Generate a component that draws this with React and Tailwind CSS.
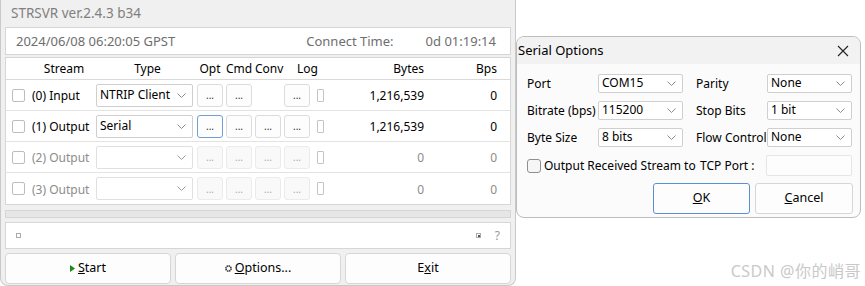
import React from 'react';

function Chevron({ className = '' }) {
  return (
    <svg width="9" height="5" viewBox="0 0 9 5" className={className}>
      <path d="M0.5 0.5 L4.5 4.5 L8.5 0.5" fill="none" stroke="currentColor" strokeWidth="1" />
    </svg>
  );
}

function Combo({ value, className = '', disabled = false }) {
  return (
    <div
      className={`flex items-center justify-between bg-white border rounded-[2px] pl-[3px] pr-[6px] ${
        disabled ? 'border-[#e0e0e0]' : 'border-[#cfcfcf]'
      } ${className}`}
    >
      <span className="text-[12px] leading-none text-black whitespace-nowrap">{value}</span>
      <Chevron className={disabled ? 'text-[#9a9a9a]' : 'text-[#8a8a8a]'} />
    </div>
  );
}

function DotButton({ disabled, focus }) {
  return (
    <div
      className={`w-[26px] h-[23px] rounded-[3px] border flex items-center justify-center text-[10px] leading-none ${
        focus
          ? 'border-[#6e9fd9] bg-[#fdfdfd] text-[#333]'
          : disabled
          ? 'border-[#ebebeb] bg-[#f9f9f9] text-[#aaa]'
          : 'border-[#dcdcdc] bg-[#fdfdfd] text-[#333]'
      }`}
    >
      ...
    </div>
  );
}

const streams = [
  { label: '(0) Input', type: 'NTRIP Client', conv: false, bytes: '1,216,539', bps: '0', active: true },
  { label: '(1) Output', type: 'Serial', conv: true, focus: true, bytes: '1,216,539', bps: '0', active: true },
  { label: '(2) Output', type: '', conv: true, bytes: '0', bps: '0', active: false },
  { label: '(3) Output', type: '', conv: true, bytes: '0', bps: '0', active: false },
];

function StreamRow({ s, last }) {
  const txt = s.active ? 'text-black' : 'text-[#8c8c8c]';
  return (
    <div className={`h-[31px] flex items-center ${last ? '' : 'border-b border-[#e3e3e3]'}`}>
      <div className="w-[13px] h-[13px] ml-[6px] border border-[#bdbdbd] rounded-[2px] bg-white" />
      <div className={`w-[64px] ml-[7px] text-[12px] whitespace-nowrap pt-[2px] ${txt}`}>{s.label}</div>
      <Combo value={s.type} disabled={!s.active} className="w-[97px] h-[23px]" />
      <div className="flex gap-[3px] ml-[4px]">
        <DotButton disabled={!s.active} focus={s.focus} />
        <DotButton disabled={!s.active} />
        {s.conv ? <DotButton disabled={!s.active} /> : <div className="w-[26px]" />}
        <DotButton disabled={!s.active} />
      </div>
      <div className="w-[7px] h-[13px] ml-[7px] border border-[#c4c4c4] rounded-[1px]" />
      <div className={`w-[100px] text-right text-[12px] pt-[2px] ${txt}`}>{s.bytes}</div>
      <div className={`w-[73px] text-right text-[12px] pt-[2px] ${txt}`}>{s.bps}</div>
    </div>
  );
}

function MainWindow() {
  return (
    <div className="w-[516px] h-[286px] shrink-0 bg-[#f0f0f0] border-x border-b border-[#c9c9c9] rounded-b-[8px] flex flex-col px-[4px]">
      <div className="h-[27px] flex items-center pl-[6px] text-[13.5px] text-[#7f7f7f] whitespace-nowrap">STRSVR ver.2.4.3 b34</div>

      <div className="h-[28px] bg-white border border-[#d6d6d6] flex items-center text-[13px] text-[#6e6e6e] whitespace-nowrap pt-[1px]">
        <span className="ml-[10px]">2024/06/08 06:20:05 GPST</span>
        <span className="ml-auto">Connect Time:</span>
        <span className="ml-[32px] mr-[14px]">0d 01:19:14</span>
      </div>

      <div className="mt-[2px] bg-white border border-[#d6d6d6] flex flex-col">
        <div className="h-[22px] flex items-center border-b border-[#d9d9d9] text-[12px] text-black whitespace-nowrap">
          <div className="w-[26px]" />
          <div className="w-[64px] text-center">Stream</div>
          <div className="w-[97px] ml-[3px] text-center">Type</div>
          <div className="ml-[1px] w-[26px] text-center">Opt</div>
          <div className="ml-[3px] w-[26px] text-center">Cmd</div>
          <div className="ml-[3px] w-[26px] text-center">Conv</div>
          <div className="ml-[3px] w-[47px] text-center">Log</div>
          <div className="w-[93px] text-right">Bytes</div>
          <div className="w-[73px] text-right">Bps</div>
        </div>
        {streams.map((s, i) => (
          <StreamRow key={s.label} s={s} last={i === streams.length - 1} />
        ))}
      </div>

      <div className="mt-[5px] h-[8px] bg-[#e6e6e6] border border-[#d6d6d6]" />

      <div className="mt-[4px] h-[27px] bg-white border border-[#d6d6d6] flex items-center px-[10px]">
        <div className="w-[5px] h-[5px] border border-[#aaa]" />
        <div className="ml-auto w-[5px] h-[5px] border border-[#aaa] relative">
          <div className="absolute right-0 bottom-0 w-[2px] h-[2px] bg-[#555]" />
        </div>
        <span className="ml-[14px] text-[12px] text-[#999]">?</span>
      </div>

      <div className="mt-[4px] flex gap-[4px] text-[12.5px] text-black whitespace-nowrap">
        <div className="flex-1 h-[31px] bg-[#fdfdfd] border border-[#d6d6d6] rounded-[4px] flex items-center justify-center">
          <svg width="5" height="7" viewBox="0 0 5 7" className="mr-[3px]">
            <path d="M0 0 L5 3.5 L0 7 Z" fill="#1e8a1e" />
          </svg>
          <span><span className="underline">S</span>tart</span>
        </div>
        <div className="flex-1 h-[31px] bg-[#fdfdfd] border border-[#d6d6d6] rounded-[4px] flex items-center justify-center">
          <svg width="7" height="7" viewBox="0 0 7 7" className="mr-[3px]">
            <circle cx="3.5" cy="3.5" r="2.6" fill="none" stroke="#333" strokeWidth="1.6" strokeDasharray="1.4 0.6" />
            <circle cx="3.5" cy="3.5" r="1" fill="#fff" />
          </svg>
          <span><span className="underline">O</span>ptions...</span>
        </div>
        <div className="flex-1 h-[31px] bg-[#fdfdfd] border border-[#d6d6d6] rounded-[4px] flex items-center justify-center">
          <span>E<span className="underline">x</span>it</span>
        </div>
      </div>
    </div>
  );
}

function Field({ label, value }) {
  return (
    <div className="flex items-center">
      <div className="w-[71px] text-[12px] text-black whitespace-nowrap pt-[2px]">{label}</div>
      <Combo value={value} className="w-[85px] h-[19px]" />
    </div>
  );
}

function SerialDialog() {
  return (
    <div className="mt-[36px] w-[345px] h-[182px] border border-[#bdbdbd] rounded-[8px] bg-[#fbfbfb] flex flex-col overflow-hidden">
      <div className="h-[27px] bg-[#f2f2f2] flex items-center pl-[1px] pr-[11px] text-[13px] text-black whitespace-nowrap">
        <span className="pt-[1px]">Serial Options</span>
        <svg width="12" height="12" viewBox="0 0 12 12" className="ml-auto">
          <path d="M1 1 L11 11 M11 1 L1 11" stroke="#222" strokeWidth="1.1" />
        </svg>
      </div>
      <div className="flex flex-col pl-[10px] pt-[9px]">
        <div className="flex flex-col gap-[7px]">
          <div className="flex gap-[13px]">
            <Field label="Port" value="COM15" />
            <Field label="Parity" value="None" />
          </div>
          <div className="flex gap-[13px]">
            <Field label="Bitrate (bps)" value="115200" />
            <Field label="Stop Bits" value="1 bit" />
          </div>
          <div className="flex gap-[13px]">
            <Field label="Byte Size" value="8 bits" />
            <Field label="Flow Control" value="None" />
          </div>
        </div>
        <div className="mt-[8px] flex items-center h-[21px] text-[12px] text-black whitespace-nowrap">
          <div className="w-[173px] flex items-center">
            <div className="w-[14px] h-[14px] border border-[#8f8f8f] rounded-[3px] bg-[#f6f6f6]" />
            <span className="ml-[3px] pt-[1px]">Output Received Stream to</span>
          </div>
          <span className="w-[66px] pt-[1px]">TCP Port :</span>
          <div className="w-[86px] h-[21px] border border-[#e6e6e6] bg-[#fdfdfd] rounded-[2px]" />
        </div>
        <div className="mt-[7px] flex gap-[5px] pl-[126px] text-[12.5px] text-black">
          <div className="w-[97px] h-[31px] border border-[#5b8fd3] bg-[#fdfdfd] rounded-[3px] flex items-center justify-center">
            <span><span className="underline">O</span>K</span>
          </div>
          <div className="w-[98px] h-[31px] border border-[#d6d6d6] bg-[#fdfdfd] rounded-[3px] flex items-center justify-center">
            <span><span className="underline">C</span>ancel</span>
          </div>
        </div>
      </div>
    </div>
  );
}

export default function App() {
  return (
    <div className="w-[865px] h-[286px] bg-white flex font-['Segoe_UI','Noto_Sans','Noto_Sans_CJK_SC',sans-serif] overflow-hidden">
      <MainWindow />
      <div className="flex flex-col">
        <SerialDialog />
        <div className="mt-[41px] self-end text-[16px] text-[#c9c9c9] tracking-[0.5px] whitespace-nowrap">CSDN @你的峭哥</div>
      </div>
    </div>
  );
}
